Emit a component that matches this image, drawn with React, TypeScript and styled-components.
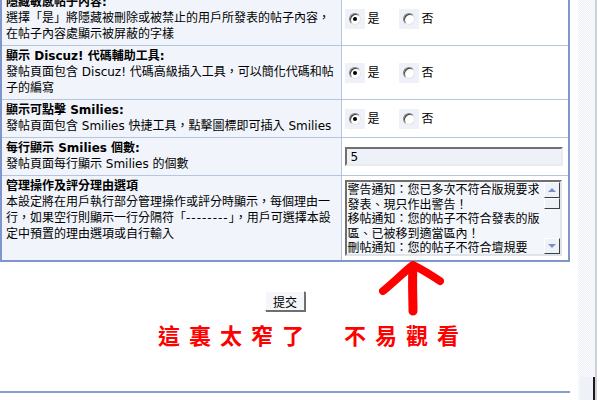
import { FC, ReactNode } from 'react'
import styled, { createGlobalStyle } from 'styled-components'

const GlobalStyle = createGlobalStyle`
  html, body {
    margin: 0;
    padding: 0;
    background: #ffffff;
    overflow: hidden;
  }
  body {
    font-family: "DejaVu Sans", "Noto Sans CJK TC", sans-serif;
    font-size: 12px;
    color: #000;
  }
`

// the separator in the reason hint is drawn wider than the font's hyphens
const Dashes = styled.span`
  letter-spacing: 1px;
`

type Setting = {
  title: string
  desc: ReactNode
  kind: 'radio' | 'text' | 'textarea'
  value?: string
}

const settings: Setting[] = [
  {
    title: '隱藏敏感帖子內容:',
    desc: '選擇「是」將隱藏被刪除或被禁止的用戶所發表的帖子內容，在帖子內容處顯示被屏蔽的字樣',
    kind: 'radio',
  },
  {
    title: '顯示 Discuz! 代碼輔助工具:',
    desc: '發帖頁面包含 Discuz! 代碼高級插入工具，可以簡化代碼和帖子的編寫',
    kind: 'radio',
  },
  {
    title: '顯示可點擊 Smilies:',
    desc: '發帖頁面包含 Smilies 快捷工具，點擊圖標即可插入 Smilies',
    kind: 'radio',
  },
  {
    title: '每行顯示 Smilies 個數:',
    desc: '發帖頁面每行顯示 Smilies 的個數',
    kind: 'text',
    value: '5',
  },
  {
    title: '管理操作及評分理由選項',
    desc: (
      <>
        本設定將在用戶執行部分管理操作或評分時顯示，每個理由一行，如果空行則顯示一行分隔符「<Dashes>--------</Dashes>」，用戶可選擇本設定中預置的理由選項或自行輸入
      </>
    ),
    kind: 'textarea',
    value:
      '警告通知：您已多次不符合版規要求發表、現只作出警告！\n移帖通知：您的帖子不符合發表的版區、已被移到適當區內！\n刪帖通知：您的帖子不符合壇規要求、已被刪除！',
  },
]

const Radio: FC<{ checked?: boolean; label: string }> = ({ checked, label }) => (
  <RadioLabel>
    <RadioBox>
      <RadioCircle>{checked && <RadioDot />}</RadioCircle>
    </RadioBox>
    {label}
  </RadioLabel>
)

const ReasonBox: FC<{ value: string }> = ({ value }) => (
  <TextAreaFrame>
    <TextArea defaultValue={value} readOnly />
    <ScrollBar>
      <ScrollButton>
        <Arrow $dir="up" />
      </ScrollButton>
      <ScrollThumb />
      <ScrollTrack />
      <ScrollButton>
        <Arrow $dir="down" />
      </ScrollButton>
    </ScrollBar>
  </TextAreaFrame>
)

export default function App() {
  return (
    <>
      <GlobalStyle />
      <Page>
        <Main>
          <SettingsTable>
            <tbody>
              {settings.map((s) => (
                <tr key={s.title}>
                  <LabelCell $tall={s.kind === 'textarea'}>
                    <Title>{s.title}</Title>
                    <Desc>{s.desc}</Desc>
                  </LabelCell>
                  <ValueCell>
                    {s.kind === 'radio' && (
                      <RadioGroup>
                        <Radio checked label="是" />
                        <Radio label="否" />
                      </RadioGroup>
                    )}
                    {s.kind === 'text' && <TextInput defaultValue={s.value} />}
                    {s.kind === 'textarea' && <ReasonBox value={s.value ?? ''} />}
                  </ValueCell>
                </tr>
              ))}
            </tbody>
          </SettingsTable>
          <Footer>
            <SubmitButton type="button">提交</SubmitButton>
            <Note>這裏太窄了　不易觀看</Note>
            <ArrowMark viewBox="0 0 75 60" width="75" height="60">
              <g fill="none" stroke="#ff0000" strokeLinecap="round" strokeLinejoin="round">
                <path d="M8 32 C 18 24, 30 12, 38 6 C 46 10, 56 16, 65 22" strokeWidth="8" />
                <path d="M38 8 C 37 22, 38 40, 38 52" strokeWidth="9" />
              </g>
            </ArrowMark>
          </Footer>
          <BottomRule />
        </Main>
        <WindowScroll>
          <WindowThumb />
        </WindowScroll>
      </Page>
    </>
  )
}

const Page = styled.div`
  display: flex;
  width: 600px;
  height: 400px;
  overflow: hidden;
`

const Main = styled.div`
  width: 578px;
  display: flex;
  flex-direction: column;
`

const SettingsTable = styled.table`
  width: 570px;
  margin-top: -8px;
  border-collapse: collapse;
  border-left: 2px solid #7f96cb;
  border-right: 2px solid #7f96cb;
  border-bottom: 2px solid #7f96cb;
  table-layout: fixed;

  tr + tr td {
    border-top: 1px solid #b4c6df;
  }
`

const LabelCell = styled.td<{ $tall?: boolean }>`
  width: 340px;
  box-sizing: border-box;
  padding: 3px 3px 3px 4px;
  background: #f1f5fb;
  border-right: 1px solid #b4c6df;
  vertical-align: ${({ $tall }) => ($tall ? 'top' : 'middle')};
`

const Title = styled.div`
  font-weight: bold;
  line-height: 15px;
`

const Desc = styled.div`
  line-height: 16px;
`

const ValueCell = styled.td`
  padding: 4px 3px;
  background: #ffffff;
  vertical-align: middle;
`

const RadioGroup = styled.div`
  display: flex;
  align-items: center;
`

const RadioLabel = styled.label`
  display: flex;
  align-items: center;
  gap: 3px;
  margin-right: 19px;
  line-height: 16px;
`

const RadioBox = styled.span`
  width: 20px;
  height: 20px;
  background: #eef2f8;
  display: flex;
  align-items: center;
  justify-content: center;
`

const RadioCircle = styled.span`
  width: 10px;
  height: 10px;
  border-radius: 50%;
  border: 1px solid;
  border-color: #808080 #e4e4e4 #e4e4e4 #808080;
  box-shadow: inset 1px 1px 0 #404040;
  background: #ffffff;
  display: flex;
  align-items: center;
  justify-content: center;
`

const RadioDot = styled.span`
  width: 4px;
  height: 4px;
  border-radius: 50%;
  background: #000;
`

const TextInput = styled.input`
  display: block;
  width: 218px;
  height: 19px;
  box-sizing: border-box;
  padding: 0 4px;
  font: inherit;
  background: #eef2f8;
  border: 2px solid;
  border-color: #707070 #e8ebf0 #e8ebf0 #707070;
  outline: none;
`

const TextAreaFrame = styled.div`
  display: flex;
  width: 217px;
  height: 76px;
  box-sizing: border-box;
  border: 2px solid;
  border-color: #6f6f6f #dfe3ea #dfe3ea #6f6f6f;
  background: #f3f6fb;
`

const TextArea = styled.textarea`
  flex: 1;
  min-width: 0;
  margin: 0;
  padding: 1px 0 0 1px;
  border: none;
  resize: none;
  overflow: hidden;
  background: transparent;
  font-family: "DejaVu Sans", "Noto Sans CJK TC", sans-serif;
  font-size: 12px;
  line-height: 14.5px;
  outline: none;
`

const ScrollBar = styled.div`
  width: 16px;
  display: flex;
  flex-direction: column;
  background: #f3f6fb;
`

const ScrollButton = styled.div`
  height: 16px;
  box-sizing: border-box;
  background: #eef2f8;
  border: 1px solid;
  border-color: #ffffff #404040 #404040 #ffffff;
  display: flex;
  align-items: center;
  justify-content: center;
`

const Arrow = styled.span<{ $dir: 'up' | 'down' }>`
  width: 0;
  height: 0;
  border-left: 4px solid transparent;
  border-right: 4px solid transparent;
  ${({ $dir }) =>
    $dir === 'up' ? 'border-bottom: 4px solid #7b8fc4;' : 'border-top: 4px solid #7b8fc4;'}
`

const ScrollThumb = styled.div`
  height: 11px;
  box-sizing: border-box;
  background: #eef2f8;
  border: 1px solid;
  border-color: #ffffff #404040 #404040 #ffffff;
`

const ScrollTrack = styled.div`
  flex: 1;
`

const Footer = styled.div`
  position: relative;
  width: 570px;
  height: 129px;
  display: flex;
  flex-direction: column;
`

const SubmitButton = styled.button`
  align-self: center;
  margin-top: 29px;
  width: 40px;
  height: 20px;
  padding: 0;
  font-family: "DejaVu Sans", "Noto Sans CJK TC", sans-serif;
  font-size: 12px;
  color: #000;
  background: #f4f6fa;
  border: 1px solid;
  border-color: #ffffff #6f6f6f #6f6f6f #ffffff;
  box-shadow: 1px 1px 0 #6f6f6f;
`

const Note = styled.div`
  margin-top: 9px;
  padding-left: 158px;
  font-family: "Noto Sans CJK TC", sans-serif;
  font-weight: bold;
  font-size: 22px;
  line-height: 28px;
  letter-spacing: 9px;
  color: #ff0000;
  white-space: nowrap;
`

const ArrowMark = styled.svg`
  position: absolute;
  left: 375px;
  top: -3px;
  filter: blur(0.5px);
`

const BottomRule = styled.div`
  width: 570px;
  height: 2px;
  background: #889ccf;
`

const WindowScroll = styled.div`
  width: 19px;
  height: 400px;
  box-sizing: border-box;
  border-right: 2px solid #cfd0d8;
  background-color: #f6f8fb;
  background-image: repeating-conic-gradient(#eef1f7 0 25%, #fafbfd 0 50%);
  background-size: 2px 2px;
  display: flex;
  flex-direction: column;
`

const WindowThumb = styled.div`
  margin-top: auto;
  height: 23px;
  box-sizing: border-box;
  margin-left: 2px;
  background: #eef2f8;
  border-right: 2px solid #1a1a1a;
`
